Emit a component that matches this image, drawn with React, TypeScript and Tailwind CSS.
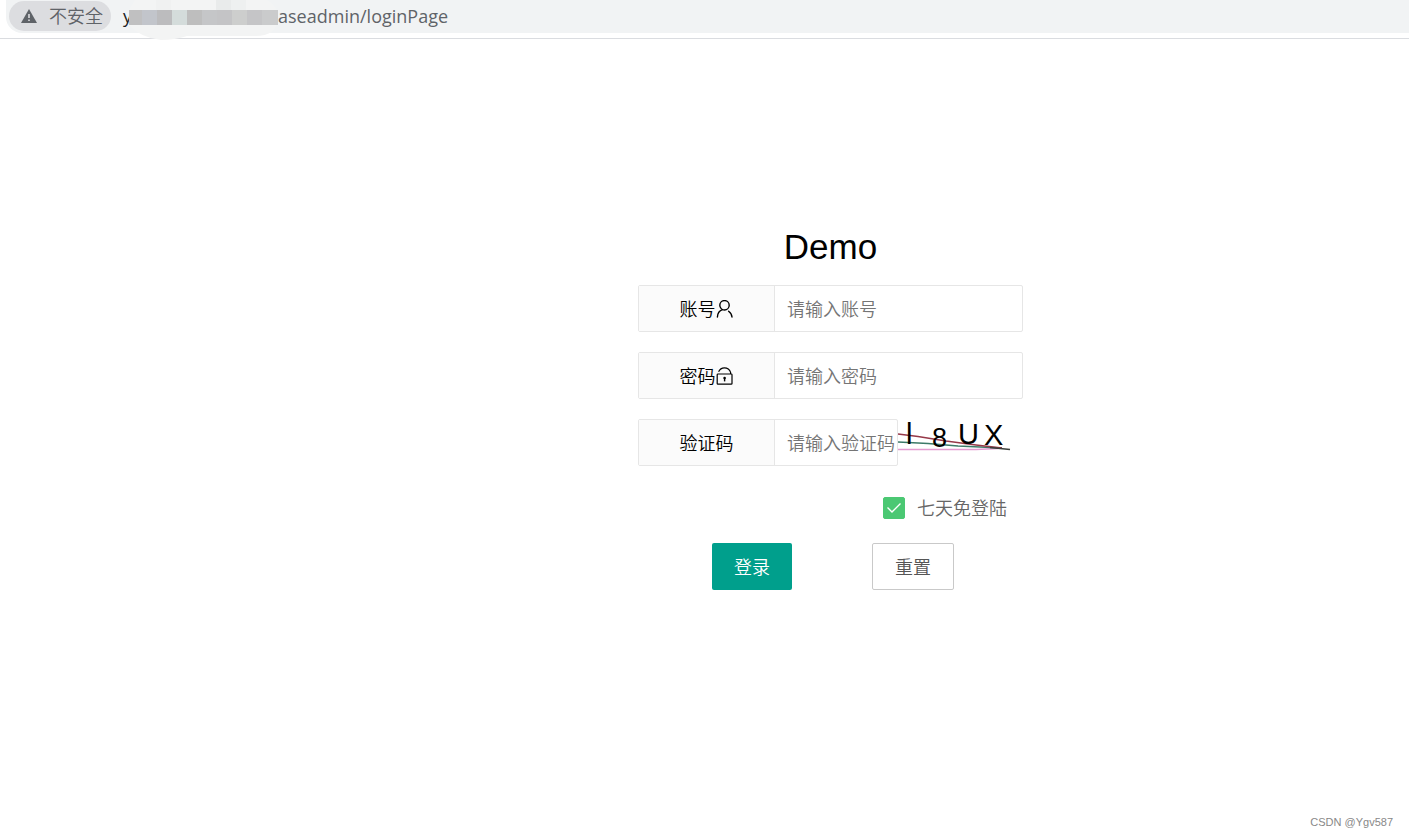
import React, { useState } from 'react';

type FieldProps = {
    id: string;
    label: string;
    placeholder: string;
    type?: string;
    icon?: React.ReactNode;
    className?: string;
};

const MOSAIC = ['#c0c0c1', '#c2c5cb', '#bcbcbe', '#d4dcdb', '#bebebe', '#c5c6c8', '#c4c4c6', '#cdcecd', '#c5c5c7', '#cacbcc'];

const UserIcon = () => (
    <svg width="18" height="18" viewBox="0 0 18 18" fill="none" stroke="currentColor" strokeWidth="1.4" strokeLinecap="round" aria-hidden="true">
        <circle cx="8.5" cy="5.3" r="4.7" />
        <path d="M6.4 9.6C3.4 10.6 1.6 13.4 1.4 17" />
        <path d="M12.6 11.2C14.6 12.6 15.8 14.6 16 17" />
    </svg>
);

const LockIcon = () => (
    <svg width="18" height="18" viewBox="0 0 18 18" fill="none" stroke="currentColor" strokeWidth="1.2" aria-hidden="true">
        <rect x="1.2" y="7" width="14.8" height="10.2" rx="0.8" />
        <path d="M2.6 4.8C3.8 2 5.8 0.8 8.4 0.8C11.4 0.8 13.6 2.4 14.6 5.4V7" />
        <path d="M8.6 11V14.4" strokeWidth="1.4" />
        <circle cx="8.6" cy="11" r="1.3" fill="currentColor" stroke="none" />
    </svg>
);

const Field: React.FC<FieldProps> = ({ id, label, placeholder, type = 'text', icon, className = 'w-full' }) => (
    <div className={`flex h-[47px] rounded-xs border border-[#e6e6e6] bg-white ${className}`}>
        <label htmlFor={id} className="flex w-[135px] shrink-0 items-center justify-center bg-[#fbfbfb] text-black">
            {label}
            {icon}
        </label>
        <input id={id} type={type} placeholder={placeholder} className="min-w-0 flex-1 border-l border-[#e6e6e6] pl-3 outline-none placeholder:text-[#757575]" />
    </div>
);

const Captcha = () => (
    <svg width="113" height="36" viewBox="0 0 113 36" role="img" aria-label="验证码">
        <g fill="none" strokeWidth="1.3">
            <path d="M0 30.5H78L100 29.5" stroke="#e39ad0" />
            <path d="M0 23L30 24.5L60 27L104 29" stroke="#3c7a68" />
            <path d="M0 15L20 17.5L48 22L78 26L104 29" stroke="#963848" />
            <path d="M92 28.5L112 30.5" stroke="#3a3f3c" strokeWidth="1.6" />
        </g>
        <g fill="#000" fontSize="29" className="font-['Liberation_Sans',sans-serif]">
            <text x="8" y="25">l</text>
            <text x="34" y="28" fontSize="27">8</text>
            <text x="60" y="25">U</text>
            <text x="86" y="26">X</text>
        </g>
    </svg>
);

const HostMosaic = () => (
    <svg width="155" height="40" viewBox="0 0 155 40" className="absolute top-0 right-0" aria-hidden="true">
        <path d="M12 0H144Q155 6 155 18Q154 36 132 36H64Q52 40 38 40Q18 38 6 25V10Z" fill="#f3f4f4" />
        <rect x="33" width="15" height="10" fill="#f0f1f1" />
        <rect x="93" width="15" height="10" fill="#e9ebeb" />
        <rect x="108" width="15" height="10" fill="#eef0f0" />
        {MOSAIC.map((color, i) => <rect key={i} x={i === 0 ? 6 : 4 + i * 15} y="10" width={i === 0 ? 13 : 16} height="15" fill={color} />)}
    </svg>
);

const AddressBar = () => (
    <header className="h-[39px] border-b border-[#dadce0] bg-white pl-1.5">
        <div className="flex h-[33px] items-center rounded-bl-2xl bg-[#f1f3f4] pb-0.5 pl-[3px] text-lg text-[#5f6368]">
            <div className="flex h-[30px] items-center gap-3 rounded-full bg-[#dcdde0] pr-2 pl-3">
                <svg width="16" height="14" viewBox="0 0 16 14" aria-hidden="true">
                    <path d="M8 0L16 14H0Z" fill="#5f6368" />
                    <path d="M8 5V9M8 10.5V12" stroke="#dcdde0" strokeWidth="1.6" />
                </svg>
                <span>不安全</span>
            </div>
            <div className="ml-3 flex items-center self-stretch font-normal">
                <span className="text-[#202124]">y</span>
                <span className="relative w-[146px] self-stretch">
                    <HostMosaic />
                </span>
                <span>aseadmin/loginPage</span>
            </div>
        </div>
    </header>
);

const App: React.FC = () => {
    const [remember, setRemember] = useState(true);

    return (
        <div className="flex min-h-screen flex-col bg-white font-['Open_Sans','Noto_Sans_CJK_SC',sans-serif] text-lg font-[350]">
            <AddressBar />

            <main className="flex flex-1 justify-center pl-63">
                <form className="mt-46 w-full max-w-[385px]" onSubmit={e => e.preventDefault()}>
                    <h1 className="mb-3.5 text-center font-['Liberation_Sans',sans-serif] text-[35px] leading-12 text-black">Demo</h1>

                    <div className="flex flex-col gap-5">
                        <Field id="account" label="账号" placeholder="请输入账号" icon={<UserIcon />} />
                        <Field id="password" label="密码" placeholder="请输入密码" type="password" icon={<LockIcon />} />
                        <div className="flex">
                            <Field id="captcha" label="验证码" placeholder="请输入验证码" className="w-65" />
                            <Captcha />
                        </div>
                    </div>

                    <label className="mt-7 mr-4 flex items-center justify-end gap-3 text-[#666]">
                        <span className="relative flex size-[22px]">
                            <input type="checkbox" checked={remember} onChange={e => setRemember(e.target.checked)} className="peer size-full appearance-none rounded-xs border border-[#d2d2d2] checked:border-[#4bc873] checked:bg-[#4bc873]" />
                            <svg viewBox="0 0 22 22" fill="none" stroke="#fff" strokeWidth="1.4" className="pointer-events-none absolute inset-0 hidden peer-checked:block" aria-hidden="true">
                                <path d="M4.5 10.5L9 15L17.5 6.5" />
                            </svg>
                        </span>
                        七天免登陆
                    </label>

                    <div className="mt-[21px] flex gap-20 pl-[74px]">
                        <button type="submit" className="h-[47px] w-20 rounded-xs bg-[#009f8c] text-white">登录</button>
                        <button type="reset" className="h-[47px] w-[82px] rounded-xs border border-[#c9c9c9] bg-white text-[#555]">重置</button>
                    </div>
                </form>
            </main>

            <footer className="px-4 pb-2 text-right font-['Liberation_Sans',sans-serif] text-[11px] leading-4 text-[#888]">CSDN @Ygv587</footer>
        </div>
    );
};

export default App;
